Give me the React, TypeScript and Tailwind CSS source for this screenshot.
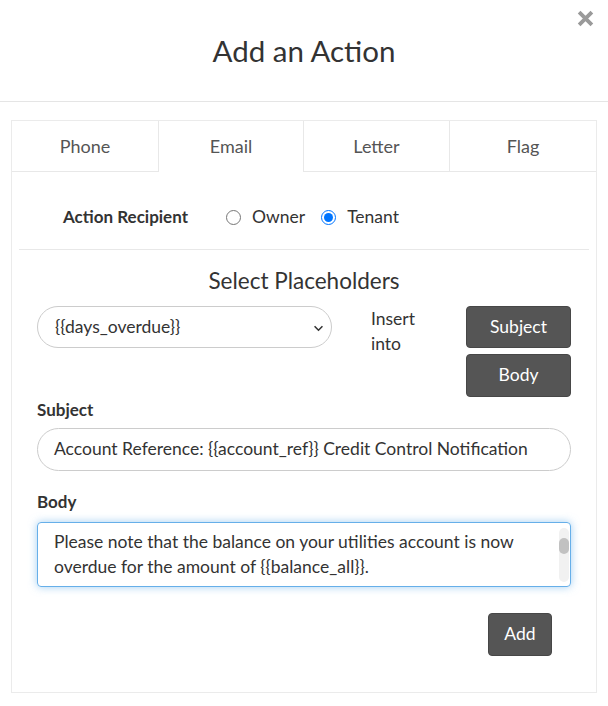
import React from 'react';

const tabs = ['Phone', 'Email', 'Letter', 'Flag'];
const activeTab = 'Email';

const Radio: React.FC<{ checked?: boolean; label: string }> = ({ checked = false, label }) => (
  <label className="flex items-center gap-[11px]">
    {checked ? (
      <span className="w-[15px] h-[15px] rounded-full border-[1.5px] border-[#0075ff] flex items-center justify-center">
        <span className="w-[9px] h-[9px] rounded-full bg-[#0075ff]" />
      </span>
    ) : (
      <span className="w-[15px] h-[15px] rounded-full border border-[#767676]" />
    )}
    <span>{label}</span>
  </label>
);

const DarkButton: React.FC<{ className?: string; children: React.ReactNode }> = ({ className = '', children }) => (
  <button className={`bg-[#555555] border border-[#474747] rounded-[4px] text-white text-[17.5px] ${className}`}>
    {children}
  </button>
);

export default function App() {
  return (
    <div className="w-full min-h-[706px] bg-white text-[#333] font-['Lato','Open_Sans',sans-serif]">
      {/* Modal header */}
      <div className="relative h-[102px] border-b border-[#e5e5e5] flex items-center justify-center">
        <h1 className="text-[29.5px] leading-none pt-px">Add an Action</h1>
        <button className="absolute right-[14px] top-[10px] w-[17px] h-[17px]">
          <svg viewBox="0 0 16 16" className="w-full h-full">
            <path d="M2 2L14 14M14 2L2 14" stroke="#9a9a9a" strokeWidth="3.6" strokeLinecap="butt" />
          </svg>
        </button>
      </div>

      <div className="px-[11px] pt-[18px]">
        <div className="border border-[#ebebeb] h-[573px]">
          {/* Tabs */}
          <div className="grid grid-cols-4 h-[51px]">
            {tabs.map((tab, i) => {
              const active = tab === activeTab;
              return (
                <div
                  key={tab}
                  className={`flex items-center justify-center text-[18px] text-[#555] ${
                    active ? 'border-x border-[#e8e8e8] pb-px' : 'border-b border-[#e8e8e8] pt-px'
                  } ${i === 2 ? 'border-r border-[#e8e8e8]' : ''}`}
                >
                  {tab}
                </div>
              );
            })}
          </div>

          <div className="px-[7px]">
            {/* Recipient */}
            <div className="flex items-center pt-[33px] pb-[20px] pl-[44px] text-[17.5px] leading-[24px] border-b border-[#e8e8e8]">
              <span className="font-bold text-[17px] w-[126px]">Action Recipient</span>
              <div className="ml-[37px] flex items-center gap-[16px]">
                <Radio label="Owner" />
                <Radio label="Tenant" checked />
              </div>
            </div>

            <div className="px-[18px]">
              <h2 className="text-center text-[22.5px] leading-[30px] mt-[16px] mb-[10px]">Select Placeholders</h2>

              <div className="flex items-start">
                <div className="relative w-[295px] h-[42px] rounded-full border border-[#cccccc] flex items-center pl-[17px] text-[17.5px]">
                  {'{{days_overdue}}'}
                  <svg viewBox="0 0 12 8" className="absolute right-[7px] top-[18px] w-[11px] h-[7px]">
                    <path d="M1.5 1.5L6 6L10.5 1.5" fill="none" stroke="#333" strokeWidth="1.8" />
                  </svg>
                </div>
                <div className="ml-[39px] text-[17.5px] leading-[25px]">
                  Insert
                  <br />
                  into
                </div>
                <div className="ml-auto w-[105px] flex flex-col gap-[6px]">
                  <DarkButton className="h-[42px]">Subject</DarkButton>
                  <DarkButton className="h-[43px]">Body</DarkButton>
                </div>
              </div>

              <div className="font-bold text-[17px] leading-[24px] mt-px mb-[6px]">Subject</div>
              <div className="h-[43px] rounded-full border border-[#cccccc] flex items-center px-[16px] text-[17.5px] whitespace-nowrap overflow-hidden">
                {'Account Reference: {{account_ref}} Credit Control Notification'}
              </div>

              <div className="font-bold text-[17px] leading-[24px] mt-[19px] mb-[8px]">Body</div>
              <div className="relative h-[65px] rounded-[4px] border border-[#66afe9] shadow-[0_0_8px_rgba(102,175,233,0.6)] pl-[16px] pr-[30px] pt-[6px] text-[17.5px] leading-[25px]">
                {'Please note that the balance on your utilities account is now overdue for the amount of {{balance_all}}.'}
                <div className="absolute right-[1px] top-[5px] bottom-[4px] w-[10px] rounded-full bg-[#f1f1f1]">
                  <div className="mt-[10px] h-[16px] w-full rounded-full bg-[#c1c1c1]" />
                </div>
              </div>

              <div className="flex justify-end mt-[26px] pr-[19px]">
                <DarkButton className="w-[64px] h-[43px]">Add</DarkButton>
              </div>
            </div>
          </div>
        </div>
      </div>
    </div>
  );
}
